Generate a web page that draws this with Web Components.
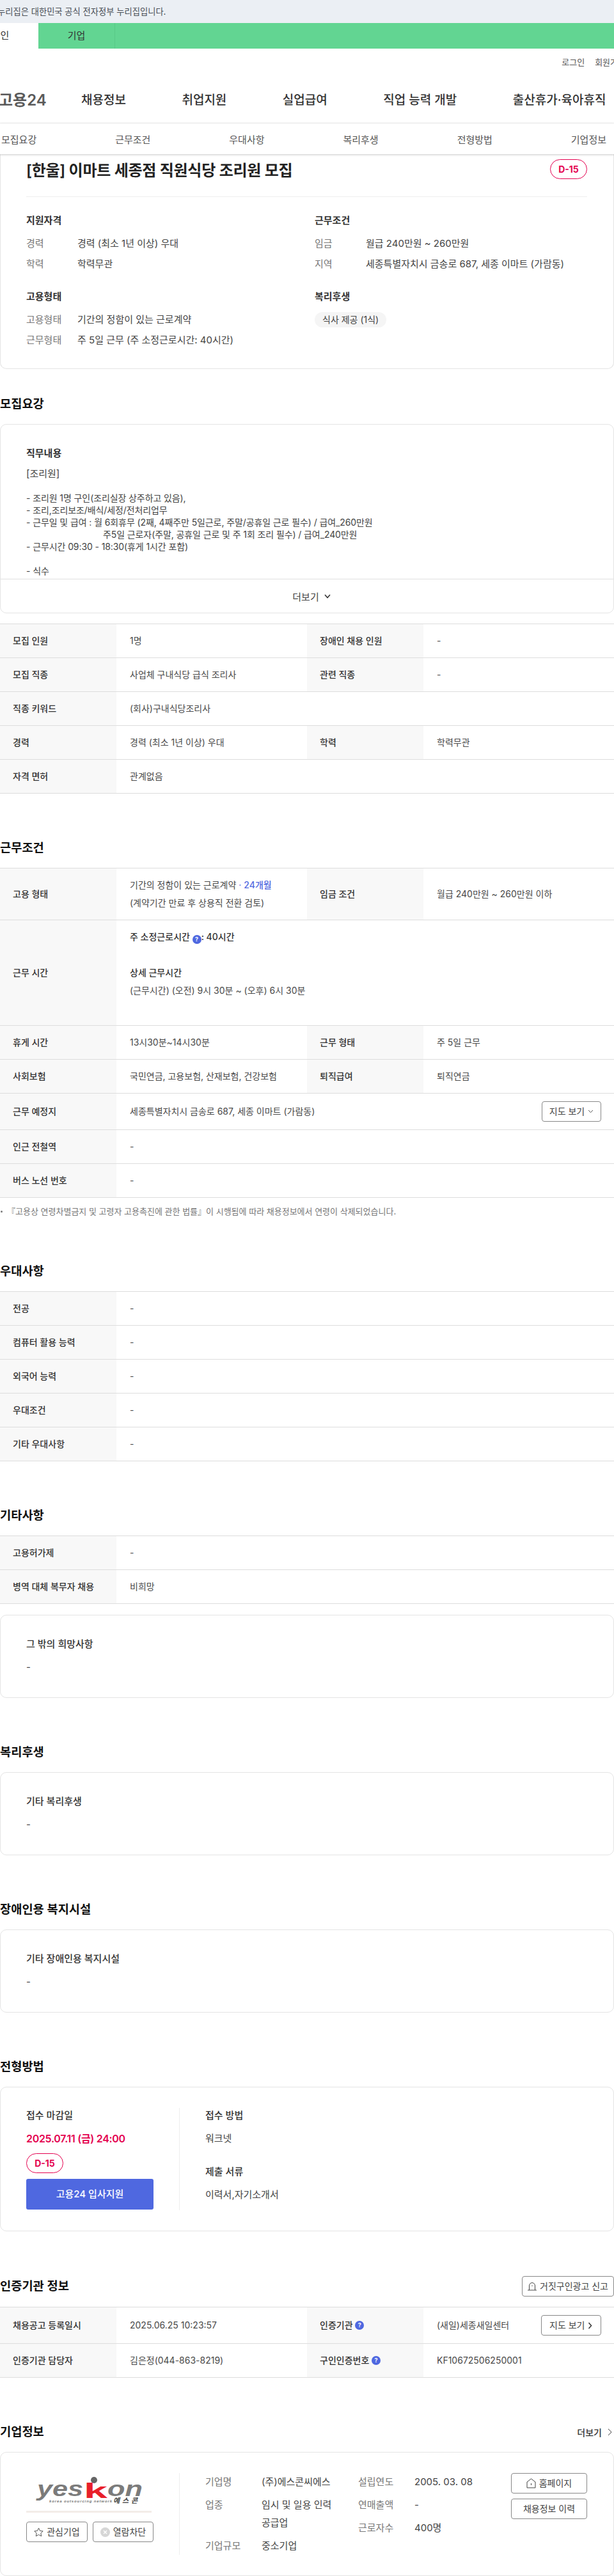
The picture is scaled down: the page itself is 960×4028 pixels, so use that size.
<!DOCTYPE html>
<html lang="ko">
<head>
<meta charset="utf-8">
<title>채용정보</title>
<style>
  html, body { margin: 0; background: #fff; }
  body {
    width: 960px;
    height: 4028px;
    overflow: hidden;
    color: #333;
    font-family: Inter, "Noto Sans CJK KR", sans-serif;
    font-size: 14px;
  }
  i.gap { display: block; height: 28px; }
</style>
</head>
<body>
<gov-banner>누리집은 대한민국 공식 전자정부 누리집입니다.</gov-banner>
<user-tabs></user-tabs>
<site-header></site-header>
<anchor-tabs></anchor-tabs>

<job-summary>
  <span slot="title">[한울] 이마트 세종점 직원식당 조리원 모집</span>
  <d-badge slot="badge"></d-badge>
  <summary-group heading="지원자격">
    <summary-row label="경력">경력 (최소 1년 이상) 우대</summary-row>
    <summary-row label="학력">학력무관</summary-row>
  </summary-group>
  <summary-group heading="근무조건">
    <summary-row label="임금">월급 240만원 ~ 260만원</summary-row>
    <summary-row label="지역">세종특별자치시 금송로 687, 세종 이마트 (가람동)</summary-row>
  </summary-group>
  <summary-group heading="고용형태">
    <summary-row label="고용형태">기간의 정함이 있는 근로계약</summary-row>
    <summary-row label="근무형태">주 5일 근무 (주 소정근로시간: 40시간)</summary-row>
  </summary-group>
  <summary-group heading="복리후생">
    <soft-chip>식사 제공 (1식)</soft-chip>
  </summary-group>
</job-summary>

<page-section heading="모집요강">
  <more-card>
    <card-label>직무내용</card-label>
    <job-text>
      <div class="first">[조리원]</div>
      <div class="lines">
        <div>- 조리원 1명 구인(조리실장 상주하고 있음),</div>
        <div>- 조리,조리보조/배식/세정/전처리업무</div>
        <div>- 근무일 및 급여 : 월 6회휴무 (2째, 4째주만 5일근로, 주말/공휴일 근로 필수) / 급여_260만원</div>
        <div class="indent">주5일 근로자(주말, 공휴일 근로 및 주 1회 조리 필수) / 급여_240만원</div>
        <div>- 근무시간 09:30 - 18:30(휴게 1시간 포함)</div>
        <div>&nbsp;</div>
        <div>- 식수</div>
      </div>
    </job-text>
  </more-card>
  <info-table class="after-card">
    <info-row><t-h>모집 인원</t-h><t-d>1명</t-d><t-h>장애인 채용 인원</t-h><t-d>-</t-d></info-row>
    <info-row><t-h>모집 직종</t-h><t-d>사업체 구내식당 급식 조리사</t-d><t-h>관련 직종</t-h><t-d>-</t-d></info-row>
    <info-row><t-h>직종 키워드</t-h><t-d wide>(회사)구내식당조리사</t-d></info-row>
    <info-row><t-h>경력</t-h><t-d>경력 (최소 1년 이상) 우대</t-d><t-h>학력</t-h><t-d>학력무관</t-d></info-row>
    <info-row><t-h>자격 면허</t-h><t-d wide>관계없음</t-d></info-row>
  </info-table>
</page-section>

<page-section heading="근무조건">
  <info-table>
    <info-row>
      <t-h>고용 형태</t-h>
      <t-d><div>기간의 정함이 있는 근로계약 <span style="color:#4f68e0">· <b style="font-weight:500">24개월</b></span><br>(계약기간 만료 후 상용직 전환 검토)</div></t-d>
      <t-h>임금 조건</t-h>
      <t-d>월급 240만원 ~ 260만원 이하</t-d>
    </info-row>
    <info-row>
      <t-h>근무 시간</t-h>
      <t-d wide>
        <div>
          <div style="font-weight:500;color:#333">주 소정근로시간 <help-dot></help-dot>: 40시간</div>
          <i class="gap"></i>
          <div style="font-weight:500;color:#333">상세 근무시간</div>
          <div>(근무시간) (오전) 9시 30분 ~ (오후) 6시 30분</div>
          <i class="gap"></i>
        </div>
      </t-d>
    </info-row>
    <info-row><t-h>휴게 시간</t-h><t-d>13시30분~14시30분</t-d><t-h>근무 형태</t-h><t-d>주 5일 근무</t-d></info-row>
    <info-row><t-h>사회보험</t-h><t-d>국민연금, 고용보험, 산재보험, 건강보험</t-d><t-h>퇴직급여</t-h><t-d>퇴직연금</t-d></info-row>
    <info-row>
      <t-h>근무 예정지</t-h>
      <t-d wide>
        <span>세종특별자치시 금송로 687, 세종 이마트 (가람동)</span>
        <outline-btn style="width:93px">지도 보기 <svg width="9" height="6" viewBox="0 0 9 6" fill="none" stroke="#555"><path d="M1 1l3.5 3.5L8 1"/></svg></outline-btn>
      </t-d>
    </info-row>
    <info-row><t-h>인근 전철역</t-h><t-d wide>-</t-d></info-row>
    <info-row><t-h>버스 노선 번호</t-h><t-d wide>-</t-d></info-row>
  </info-table>
  <foot-note>『고용상 연령차별금지 및 고령자 고용촉진에 관한 법률』이 시행됨에 따라 채용정보에서 연령이 삭제되었습니다.</foot-note>
</page-section>

<page-section heading="우대사항">
  <info-table>
    <info-row><t-h>전공</t-h><t-d wide>-</t-d></info-row>
    <info-row><t-h>컴퓨터 활용 능력</t-h><t-d wide>-</t-d></info-row>
    <info-row><t-h>외국어 능력</t-h><t-d wide>-</t-d></info-row>
    <info-row><t-h>우대조건</t-h><t-d wide>-</t-d></info-row>
    <info-row><t-h>기타 우대사항</t-h><t-d wide>-</t-d></info-row>
  </info-table>
</page-section>

<page-section heading="기타사항">
  <info-table>
    <info-row><t-h>고용허가제</t-h><t-d wide>-</t-d></info-row>
    <info-row><t-h>병역 대체 복무자 채용</t-h><t-d wide>비희망</t-d></info-row>
  </info-table>
  <note-card class="after-table" heading="그 밖의 희망사항">-</note-card>
</page-section>

<page-section heading="복리후생">
  <note-card heading="기타 복리후생">-</note-card>
</page-section>

<page-section heading="장애인용 복지시설">
  <note-card heading="기타 장애인용 복지시설">-</note-card>
</page-section>

<page-section heading="전형방법">
  <apply-card></apply-card>
</page-section>

<page-section heading="인증기관 정보">
  <outline-btn slot="action" style="width:144px">
    <svg width="14" height="14" viewBox="0 0 14 14" fill="none" stroke="#444"><path d="M0 13h14M2.5 13V6a4.5 4.5 0 0 1 9 0v7M7 5.500v1.500"/></svg>거짓구인광고 신고
  </outline-btn>
  <info-table>
    <info-row>
      <t-h>채용공고 등록일시</t-h><t-d>2025.06.25 10:23:57</t-d>
      <t-h>인증기관&nbsp;<help-dot></help-dot></t-h>
      <t-d>
        <span>(새일)세종새일센터</span>
        <outline-btn style="width:94.500px;flex:none">지도 보기 <svg width="7" height="11" viewBox="0 0 7 11" fill="none" stroke="#333" stroke-width="1.500"><path d="M1.500 1l4 4.500-4 4.500"/></svg></outline-btn>
      </t-d>
    </info-row>
    <info-row>
      <t-h>인증기관 담당자</t-h><t-d>김은정(044-863-8219)</t-d>
      <t-h>구인인증번호&nbsp;<help-dot></help-dot></t-h><t-d>KF10672506250001</t-d>
    </info-row>
  </info-table>
</page-section>

<page-section heading="기업정보">
  <more-link slot="action">더보기</more-link>
  <company-card></company-card>
</page-section>

<script>
function define(name, css, html, attrs) {
  const tpl = document.createElement('template');
  tpl.innerHTML = `<style>${css}</style>${html}`;
  customElements.define(name, class extends HTMLElement {
    connectedCallback() {
      if (this.shadowRoot) return;
      const root = this.attachShadow({ mode: 'open' });
      root.appendChild(tpl.content.cloneNode(true));
      (attrs || []).forEach((a) => {
        root.querySelectorAll(`[data-text="${a}"]`).forEach((el) => {
          el.textContent = this.getAttribute(a) || '';
        });
      });
    }
  });
}

define('gov-banner', `
  :host { display: block; height: 36px; background: #ebeff4; overflow: hidden; }
  div { margin-left: -4px; font-size: 13.300px; line-height: 36px; color: #4a4f57; white-space: nowrap; }
`, `<div><slot></slot></div>`);

define('user-tabs', `
  :host { display: flex; height: 40px; background: #62d592; overflow: hidden; }
  div { flex: none; width: 119px; line-height: 40px; text-align: center; font-size: 15px; color: #333; }
  .on { margin-left: -59px; background: #fff; }
  .off { border-right: 1px solid #58c987; }
`, `<div class="on">개인</div><div class="off">기업</div>`);

define('site-header', `
  :host { display: block; overflow: hidden; border-bottom: 1px solid #eee; }
  .util { display: flex; justify-content: flex-end; gap: 16px; height: 40px; align-items: center; margin-right: -18px; font-size: 13px; color: #555; }
  nav { display: flex; align-items: center; height: 76px; white-space: nowrap; }
  .logo { flex: none; width: 129px; margin-left: -2px; font-size: 24px; font-weight: 600; color: #5a5a5a; }
  .menu { display: flex; gap: 87.500px; font-size: 19px; font-weight: 500; color: #333; }
`, `
  <div class="util"><span>로그인</span><span>회원가입</span></div>
  <nav>
    <div class="logo">고용24</div>
    <div class="menu"><span>채용정보</span><span>취업지원</span><span>실업급여</span><span>직업 능력 개발</span><span>출산휴가·육아휴직</span></div>
  </nav>
`);

define('anchor-tabs', `
  :host { display: flex; position: relative; z-index: 2; justify-content: space-between; align-items: center; height: 48px; padding: 0 12px 0 2px; background: #fff; box-shadow: 0 1px 3px rgba(0,0,0,.22); font-size: 15px; color: #555; }
`, `<span>모집요강</span><span>근무조건</span><span>우대사항</span><span>복리후생</span><span>전형방법</span><span>기업정보</span>`);

define('d-badge', `
  :host { display: inline-flex; box-sizing: border-box; width: 58px; height: 31px; align-items: center; justify-content: center; border: 1px solid #e4004f; border-radius: 16px; color: #e4004f; font-size: 14px; font-weight: 700; background: #fff; }
`, `D-15`);

define('job-summary', `
  :host { display: block; box-sizing: border-box; height: 336px; padding: 6px 41px 0 40px; border: 1px solid #e4e4e4; border-top: 0; border-radius: 0 0 10px 10px; }
  .top { display: flex; justify-content: space-between; align-items: center; padding-bottom: 25px; border-bottom: 1px solid #eee; }
  .name { font-size: 24px; font-weight: 600; color: #222; letter-spacing: -.3px; }
  .grid { display: grid; grid-template-columns: 451px 1fr; row-gap: 27px; padding-top: 25px; }
`, `
  <div class="top"><div class="name"><slot name="title"></slot></div><slot name="badge"></slot></div>
  <div class="grid"><slot></slot></div>
`);

define('summary-group', `
  :host { display: block; }
  h3 { margin: 0 0 12px; font-size: 15px; line-height: 24px; font-weight: 600; color: #333; }
  .rows { display: flex; flex-direction: column; align-items: flex-start; gap: 8px; }
`, `<h3 data-text="heading"></h3><div class="rows"><slot></slot></div>`, ['heading']);

define('summary-row', `
  :host { display: flex; font-size: 15px; line-height: 24px; color: #444; }
  span { flex: none; width: 80px; color: #777; }
`, `<span data-text="label"></span><div><slot></slot></div>`, ['label']);

define('soft-chip', `
  :host { display: inline-block; height: 24px; padding: 0 12px; border-radius: 12px; background: #f5f5f5; font-size: 14px; line-height: 24px; color: #444; }
`, `<slot></slot>`);

define('page-section', `
  :host { display: block; margin-top: 70px; }
  :host(:first-of-type) { margin-top: 40px; }
  .head { display: flex; justify-content: space-between; align-items: center; min-height: 30px; margin-bottom: 16px; }
  h2 { margin: 0; font-size: 18.700px; line-height: 30px; font-weight: 600; color: #111; }
  ::slotted(.after-card) { margin-top: 16px; }
  ::slotted(.after-table) { margin-top: 17px; }
`, `<div class="head"><h2 data-text="heading"></h2><slot name="action"></slot></div><slot></slot>`, ['heading']);

define('more-card', `
  :host { display: block; border: 1px solid #e4e4e4; border-radius: 10px; overflow: hidden; }
  .clip { height: 208px; padding: 33px 40px 0; overflow: hidden; border-bottom: 1px solid #e0e0e0; }
  .more { display: flex; align-items: center; justify-content: center; gap: 8px; height: 52px; padding-left: 14px; font-size: 15px; color: #444; }
`, `
  <div class="clip"><slot></slot></div>
  <div class="more">더보기 <svg width="10" height="7" viewBox="0 0 10 7" fill="none" stroke="#333" stroke-width="1.500"><path d="M1 1l4 4.500L9 1"/></svg></div>
`);

define('card-label', `
  :host { display: block; font-size: 15px; line-height: 24px; font-weight: 600; color: #333; }
`, `<slot></slot>`);

define('job-text', `
  :host { display: block; font-size: 15px; color: #444; }
  ::slotted(.first) { margin-top: 8px; line-height: 24px; }
  ::slotted(.lines) { margin-top: 16px; line-height: 19px; font-size: 14px; letter-spacing: -.1px; }
`, `<slot></slot>`);

define('info-table', `
  :host { display: block; border-top: 1px solid #ddd; }
`, `<slot></slot>`);

define('info-row', `
  :host { display: grid; grid-template-columns: 182px 298px 182px 298px; border-bottom: 1px solid #ddd; }
`, `<slot></slot>`);

define('t-h', `
  :host { display: flex; align-items: center; padding: 12px 20px; background: #f8f8f8; font-size: 14px; line-height: 28px; font-weight: 500; color: #333; white-space: nowrap; }
`, `<slot></slot>`);

define('t-d', `
  :host { display: flex; align-items: center; justify-content: space-between; padding: 12px 20px 12px 21px; font-size: 14px; line-height: 28px; color: #4a4a4a; }
  :host([wide]) { grid-column: span 3; }
`, `<slot></slot>`);

define('help-dot', `
  :host { display: inline-block; width: 14px; height: 14px; border-radius: 50%; background: #4f68e0; color: #fff; font-size: 9px; font-weight: 700; line-height: 14px; text-align: center; vertical-align: -2px; }
`, `?`);

define('outline-btn', `
  :host { display: inline-flex; box-sizing: border-box; height: 32px; align-items: center; justify-content: center; gap: 5px; border: 1px solid #888; border-radius: 4px; background: #fff; font-size: 14px; line-height: 1; color: #444; white-space: nowrap; }
`, `<slot></slot>`);

define('more-link', `
  :host { display: inline-flex; align-items: center; gap: 9px; margin-right: 3px; font-size: 14px; font-weight: 500; color: #333; }
`, `<slot></slot><svg width="7" height="12" viewBox="0 0 7 12" fill="none" stroke="#444"><path d="M1 1l5 5-5 5"/></svg>`);

define('foot-note', `
  :host { display: flex; align-items: center; gap: 7px; margin: 12px 0 3px 1px; font-size: 13px; line-height: 18px; color: #777; white-space: nowrap; }
  i { width: 3px; height: 3px; border-radius: 50%; background: #777; }
`, `<i></i><span><slot></slot></span>`);

define('note-card', `
  :host { display: block; box-sizing: border-box; height: 130px; padding: 33px 40px; border: 1px solid #e4e4e4; border-radius: 10px; }
  h3 { margin: 0 0 12px; font-size: 15px; line-height: 24px; font-weight: 500; color: #333; }
  div { font-size: 15px; line-height: 24px; color: #444; }
`, `<h3 data-text="heading"></h3><div><slot></slot></div>`, ['heading']);

define('apply-card', `
  :host { display: flex; box-sizing: border-box; height: 226px; padding: 32px 40px; border: 1px solid #e4e4e4; border-radius: 10px; }
  h4 { margin: 0 0 12px; font-size: 15px; line-height: 24px; font-weight: 500; color: #333; }
  .left { flex: none; box-sizing: border-box; width: 240px; padding-right: 40px; border-right: 1px solid #eee; display: flex; flex-direction: column; align-items: flex-start; }
  .right { padding-left: 40px; font-size: 15px; line-height: 24px; color: #444; }
  .date { font-size: 16px; line-height: 24px; font-weight: 600; color: #e4004f; letter-spacing: -.3px; margin-bottom: 11px; }
  .go { align-self: stretch; height: 48px; margin-top: 9px; border-radius: 3px; background: #4f68e0; color: #fff; font-size: 15px; font-weight: 500; line-height: 48px; text-align: center; }
  p { margin: 0 0 28px; }
`, `
  <div class="left">
    <h4>접수 마감일</h4>
    <div class="date">2025.07.11 (금) 24:00</div>
    <d-badge></d-badge>
    <div class="go">고용24 입사지원</div>
  </div>
  <div class="right">
    <h4>접수 방법</h4>
    <p>워크넷</p>
    <h4>제출 서류</h4>
    <div>이력서,자기소개서</div>
  </div>
`);

define('company-card', `
  :host { display: flex; box-sizing: border-box; height: 194px; padding: 32px 40px; border: 1px solid #e4e4e4; border-radius: 10px; }
  .left { flex: none; box-sizing: border-box; width: 240px; padding-right: 40px; border-right: 1px solid #eee; }
  .logo { display: block; width: 196px; height: 59px; border-bottom: 3px solid #f3ece8; }
  .btns { display: flex; justify-content: space-between; margin-top: 14px; }
  .info { flex: none; width: 478px; margin-left: 40px; display: grid; grid-template-columns: 239px 239px; font-size: 15px; line-height: 28px; color: #444; }
  dl { margin: 0; display: grid; grid-template-columns: 88px 1fr; row-gap: 8px; align-content: start; }
  dt { color: #777; }
  dd { margin: 0; padding-right: 14px; }
  .side { flex: none; width: 119px; display: flex; flex-direction: column; gap: 8px; }
`, `
  <div class="left">
    <svg class="logo" viewBox="0 0 196 59">
      <circle cx="106" cy="11" r="5" fill="#666"/>
      <text x="17" y="36" font-family="Liberation Sans" font-size="33" font-weight="700" font-style="italic" fill="#7b7b7b" textLength="72" lengthAdjust="spacingAndGlyphs">yes</text>
      <text x="90" y="39" font-family="Liberation Sans" font-size="34" font-weight="700" fill="#e8202a" textLength="37" lengthAdjust="spacingAndGlyphs">k</text>
      <text x="127" y="36" font-family="Liberation Sans" font-size="33" font-weight="700" font-style="italic" fill="#7b7b7b" textLength="55" lengthAdjust="spacingAndGlyphs">on</text>
      <text x="36" y="46" font-family="Liberation Sans" font-size="6" font-weight="700" font-style="italic" fill="#777" textLength="98">korea outsourcing network</text>
      <text x="136" y="47" font-family="Noto Sans CJK KR" font-size="11" font-weight="700" font-style="italic" fill="#444" textLength="38">예스콘</text>
    </svg>
    <div class="btns">
      <outline-btn style="width:96px"><svg width="15" height="15" viewBox="0 0 15 15" fill="none" stroke="#555"><path d="M7.500 1l2 4.300 4.700.600-3.400 3.200.9 4.600-4.200-2.300-4.200 2.300.9-4.600L.8 5.900l4.700-.600z"/></svg>관심기업</outline-btn>
      <outline-btn style="width:95px"><svg width="15" height="15" viewBox="0 0 15 15"><circle cx="7.500" cy="7.500" r="7.500" fill="#d6d6d6"/><path d="M5 5l5 5M10 5l-5 5" stroke="#fff" stroke-width="1.300"/></svg>열람차단</outline-btn>
    </div>
  </div>
  <div class="info">
    <dl>
      <dt>기업명</dt><dd>(주)에스콘씨에스</dd>
      <dt>업종</dt><dd>임시 및 일용 인력<br>공급업</dd>
      <dt>기업규모</dt><dd>중소기업</dd>
    </dl>
    <dl>
      <dt>설립연도</dt><dd>2005. 03. 08</dd>
      <dt>연매출액</dt><dd>-</dd>
      <dt>근로자수</dt><dd>400명</dd>
    </dl>
  </div>
  <div class="side">
    <outline-btn style="width:119px"><svg width="15" height="16" viewBox="0 0 15 16" fill="none" stroke="#444"><path d="M1 15h13V6L7.500 1 1 6zM7.500 8v3"/></svg>홈페이지</outline-btn>
    <outline-btn style="width:119px">채용정보 이력</outline-btn>
  </div>
`);
</script>
<style>
  job-text .indent { padding-left: 120px; }
</style>
</body>
</html>
